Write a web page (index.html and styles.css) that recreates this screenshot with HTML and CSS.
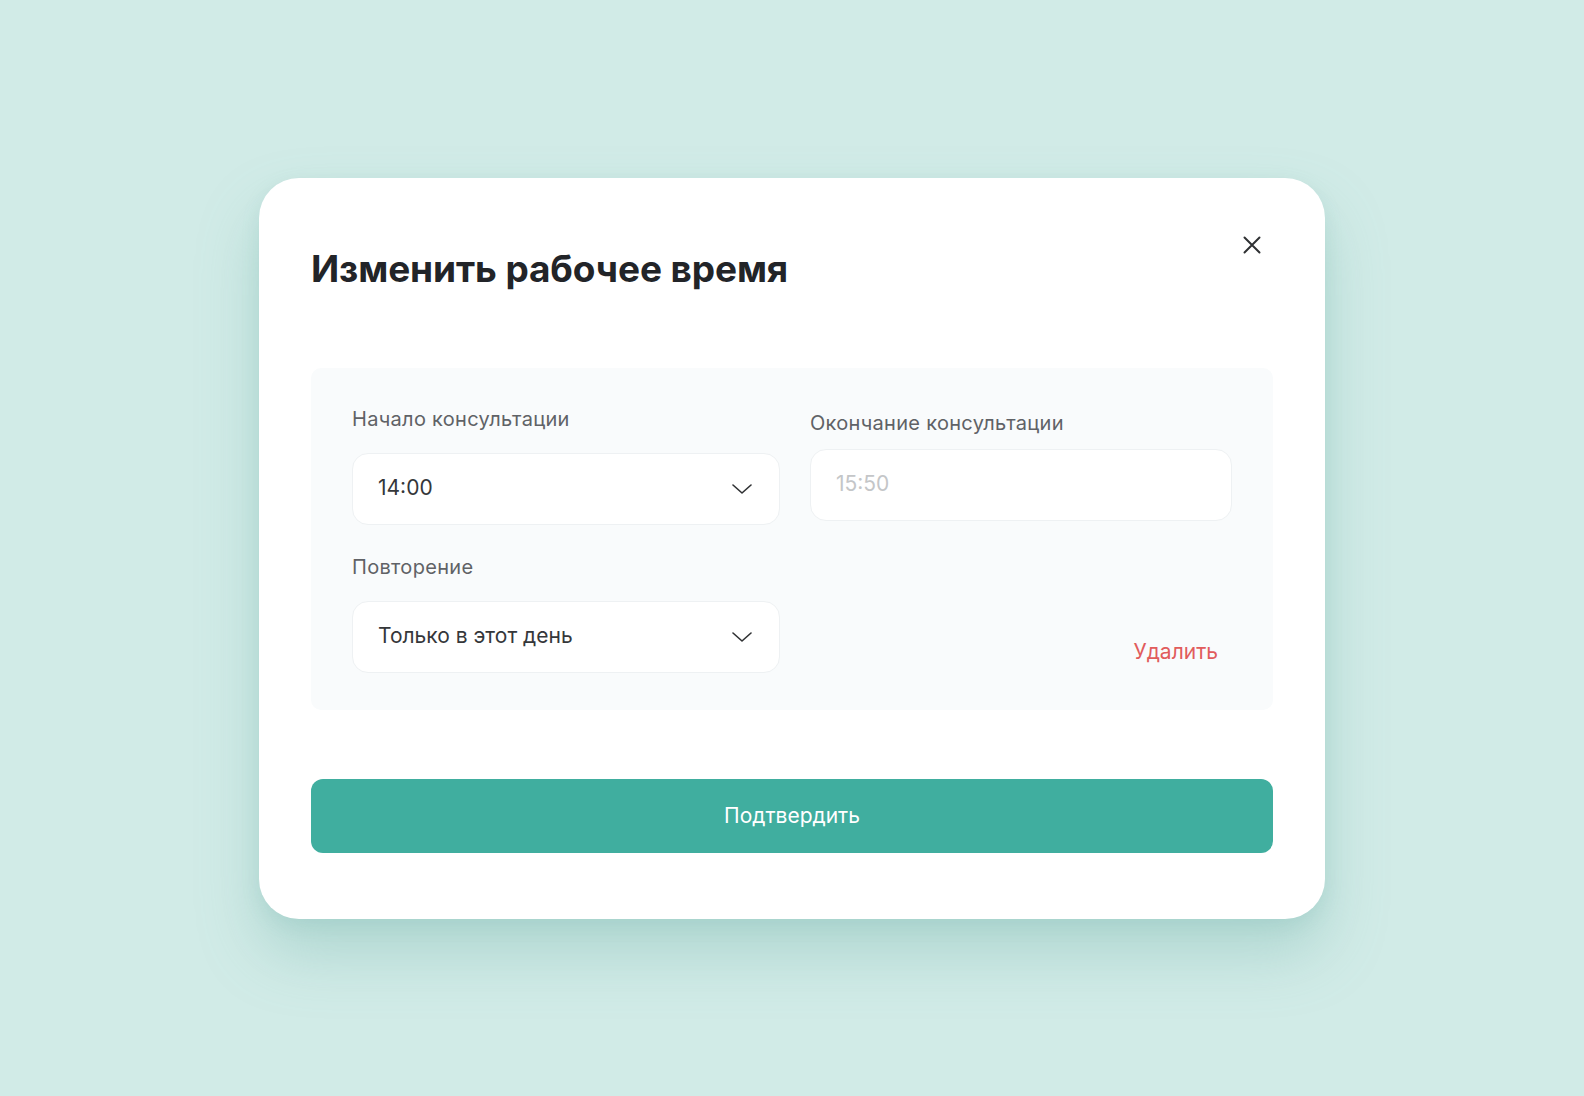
FILE: index.html
```html
<!DOCTYPE html>
<html lang="ru">
<head>
<meta charset="utf-8">
<title>Изменить рабочее время</title>
<link rel="stylesheet" href="styles.css">
</head>
<body>
<div class="modal">
  <div class="modal-head">
    <h1 class="modal-title">Изменить рабочее время</h1>
    <button class="close-btn" aria-label="Закрыть">
      <svg width="18" height="18" viewBox="0 0 18 18"><path d="M1.5 1.5 L16.5 16.5 M16.5 1.5 L1.5 16.5" stroke="#2f3133" stroke-width="2" stroke-linecap="round" fill="none"/></svg>
    </button>
  </div>
  <div class="panel">
    <div class="field">
      <div class="field-label">Начало консультации</div>
      <div class="select">
        <span class="select-value">14:00</span>
        <svg class="chevron" width="20" height="10" viewBox="0 0 20 10"><path d="M1 1 L10 9 L19 1" stroke="#2f3133" stroke-width="1.6" fill="none" stroke-linecap="round" stroke-linejoin="round"/></svg>
      </div>
    </div>
    <div class="field field-end">
      <div class="field-label">Окончание консультации</div>
      <div class="select select-disabled">
        <span class="select-placeholder">15:50</span>
      </div>
    </div>
    <div class="field field-row2">
      <div class="field-label">Повторение</div>
      <div class="select">
        <span class="select-value">Только в этот день</span>
        <svg class="chevron" width="20" height="10" viewBox="0 0 20 10"><path d="M1 1 L10 9 L19 1" stroke="#2f3133" stroke-width="1.6" fill="none" stroke-linecap="round" stroke-linejoin="round"/></svg>
      </div>
    </div>
    <button class="delete-link">Удалить</button>
  </div>
  <button class="confirm-btn">Подтвердить</button>
</div>
</body>
</html>
```
FILE: styles.css
```css
* { box-sizing: border-box; }
html, body { margin: 0; padding: 0; }
body {
  min-height: 100vh;
  background: #d1ebe7;
  display: flex;
  align-items: center;
  justify-content: center;
  font-family: Inter, "Noto Sans", sans-serif;
  color: #2f3133;
}
.modal {
  width: 1066px;
  background: #ffffff;
  border-radius: 40px;
  padding: 69px 52px 66px;
  box-shadow: 0 34px 60px rgba(110, 175, 165, 0.35), 0 6px 18px rgba(110, 175, 165, 0.15);
}
.modal-head {
  display: flex;
  justify-content: space-between;
  align-items: flex-start;
}
.modal-title {
  margin: 0;
  font-size: 37px;
  line-height: 44px;
  font-weight: 700;
  color: #222428;
  letter-spacing: -0.1px;
}
.close-btn {
  border: 0;
  background: none;
  padding: 0;
  margin: -11px 12px 0 0;
  width: 18px;
  height: 18px;
  display: flex;
  cursor: pointer;
}
.panel {
  margin-top: 77px;
  background: #f9fbfc;
  border-radius: 10px;
  padding: 39px 41px 37px;
  display: grid;
  grid-template-columns: 428px 422px;
  column-gap: 30px;
  row-gap: 30px;
}
.field {
  display: flex;
  flex-direction: column;
}
.field-label {
  font-size: 20px;
  line-height: 24px;
  color: #606266;
  letter-spacing: 0.3px;
  margin-bottom: 22px;
}
.field-end .field-label {
  margin-top: 4px;
  margin-bottom: 14px;
}
.select {
  height: 72px;
  background: #ffffff;
  border: 1px solid #eef1f3;
  border-radius: 16px;
  display: flex;
  align-items: center;
  justify-content: space-between;
  padding: 0 27px 3px 25px;
}
.select-value {
  font-size: 21px;
  color: #35373a;
}
.select-placeholder {
  font-size: 21px;
  color: #c4c6c8;
}
.chevron { margin-top: 4px; }
.delete-link {
  justify-self: end;
  align-self: end;
  margin: 0 14px 9px 0;
  padding: 0;
  border: 0;
  background: none;
  font-family: inherit;
  font-size: 21px;
  line-height: 24px;
  color: #e15c5c;
  cursor: pointer;
}
.confirm-btn {
  display: block;
  width: 100%;
  margin-top: 69px;
  height: 74px;
  border: 0;
  border-radius: 12px;
  background: #40ae9f;
  color: #ffffff;
  font-family: inherit;
  font-size: 21px;
  cursor: pointer;
}
```
